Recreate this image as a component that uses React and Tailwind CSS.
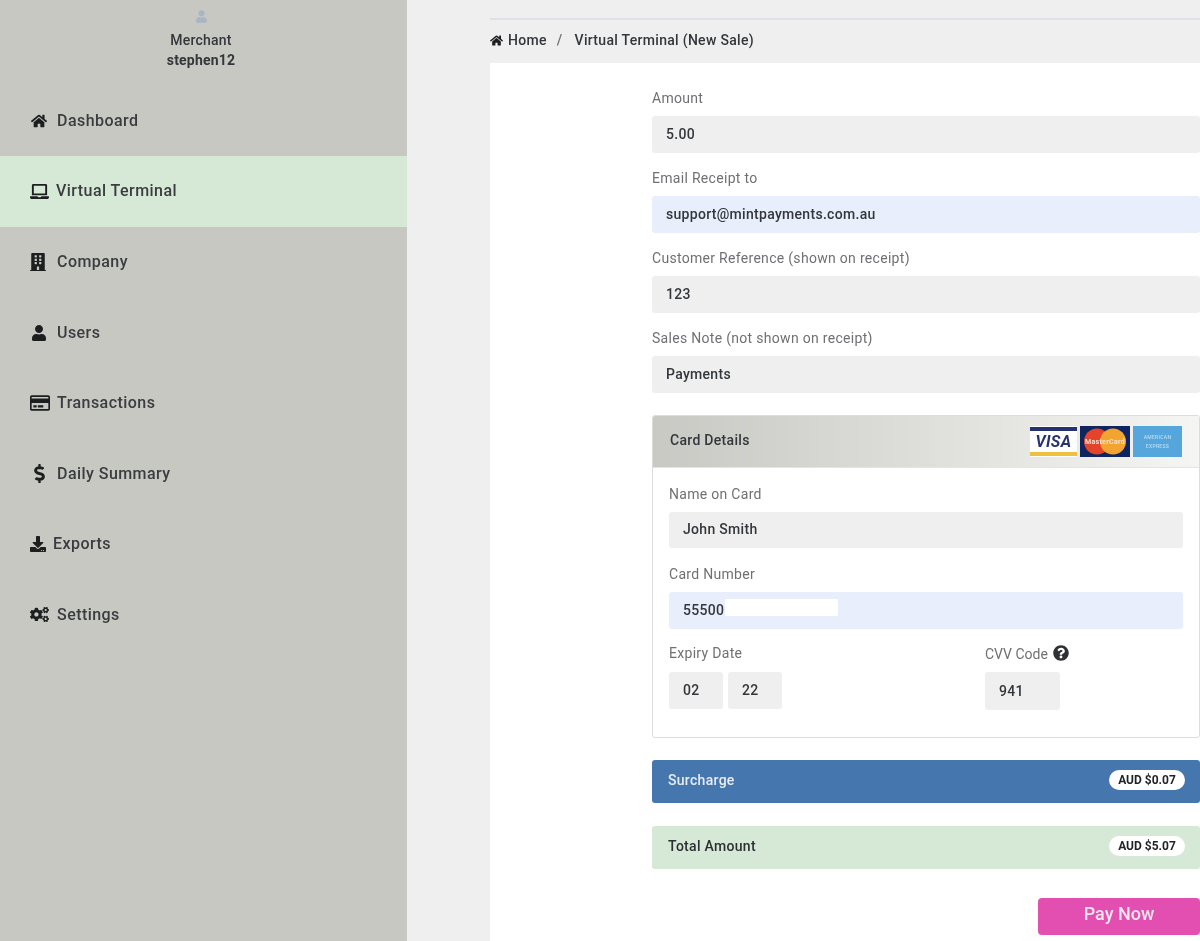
import React from "react";
import { FaHome, FaLaptop, FaBuilding, FaUser, FaRegCreditCard, FaDollarSign, FaDownload, FaCogs, FaQuestionCircle } from "react-icons/fa";

const nav = [
  { label: "Dashboard", Icon: FaHome, icon: "w-[16px] h-[16px]", box: "w-[27px] pl-[1px]" },
  { label: "Virtual Terminal", Icon: FaLaptop, icon: "w-[19px] h-[19px]", box: "w-[26px]", active: true },
  { label: "Company", Icon: FaBuilding, icon: "w-[16px] h-[18px]", box: "w-[27px]" },
  { label: "Users", Icon: FaUser, icon: "w-[16px] h-[16px]", box: "w-[27px] pl-[1px]" },
  { label: "Transactions", Icon: FaRegCreditCard, icon: "w-[20px] h-[20px]", box: "w-[27px]" },
  { label: "Daily Summary", Icon: FaDollarSign, icon: "w-[11px] h-[19px]", box: "w-[27px] pl-[4px]" },
  { label: "Exports", Icon: FaDownload, icon: "w-[16px] h-[16px]", box: "w-[23px]" },
  { label: "Settings", Icon: FaCogs, icon: "w-[19px] h-[17px]", box: "w-[27px]" },
];

function Field({ label, value, blue, className = "" }) {
  return (
    <div className={className}>
      <div className="h-[36px] pt-[10px] text-[14px] leading-[16px] tracking-[0.3px] text-[#6f7073]">{label}</div>
      <div className={`h-[37px] rounded-[3px] pl-[14px] pb-[1px] flex items-center text-[14px] font-medium tracking-[0.3px] text-[#33363a] ${blue ? "bg-[#e8eefb]" : "bg-[#efefef]"}`}>
        {value}
      </div>
    </div>
  );
}

function Bar({ label, amount, className }) {
  return (
    <div className={`h-[43px] rounded-[3px] flex items-center justify-between pb-[3px] pl-[16px] pr-[15px] text-[14px] font-medium tracking-[0.3px] ${className}`}>
      <span>{label}</span>
      <span className="h-[20px] w-[76px] rounded-full bg-white text-[#1f2226] text-[12px] tracking-normal font-bold flex items-center justify-center">{amount}</span>
    </div>
  );
}

function Logos() {
  return (
    <div className="flex gap-[3px]">
      <div className="w-[47px] h-[31px] bg-white flex flex-col justify-between py-[1px]">
        <div className="h-[4px] bg-[#26316f]" />
        <div className="text-center text-[16px] leading-[15px] font-bold italic text-[#27346f]">VISA</div>
        <div className="h-[4px] bg-[#eec040]" />
      </div>
      <svg width="50" height="31" viewBox="0 0 50 31">
        <rect width="50" height="31" fill="#0e2560" />
        <circle cx="17" cy="15.5" r="13" fill="#e2442c" />
        <circle cx="33" cy="15.5" r="13" fill="#f3a32f" />
        <text x="25" y="18" textAnchor="middle" fontSize="7" fontWeight="700" fill="#f6e3cf" fontFamily="Roboto, sans-serif">MasterCard</text>
      </svg>
      <svg width="49" height="31" viewBox="0 0 49 31">
        <rect width="49" height="31" fill="#54a6dd" />
        <text x="24.5" y="13" textAnchor="middle" fontSize="5" fill="#bcdcf2" fontFamily="Roboto, sans-serif">AMERICAN</text>
        <text x="24.5" y="22" textAnchor="middle" fontSize="5" fill="#bcdcf2" fontFamily="Roboto, sans-serif">EXPRESS</text>
      </svg>
    </div>
  );
}

export default function App() {
  return (
    <div className="w-[1200px] h-[941px] overflow-hidden flex bg-[#efefef] font-['Roboto',sans-serif] blur-[0.4px]">
      <aside className="w-[407px] shrink-0 bg-[#c7c8c2] text-[#3a3c40]">
        <div className="h-[85.5px] pt-[10px] pr-[5px] flex flex-col items-center">
          <FaUser className="w-[11px] h-[13px] text-[#a8b5c4] mb-[7px]" />
          <div className="text-[14px] leading-[20px] font-medium tracking-[0.2px] text-[#33363a]">Merchant</div>
          <div className="text-[14px] leading-[20px] font-bold tracking-[0.2px] text-[#33363a]">stephen12</div>
        </div>
        <nav>
          {nav.map(({ label, Icon, icon, box, active }) => (
            <div key={label} className={`h-[70.6px] pl-[30px] flex items-center text-[16px] font-medium tracking-[0.45px] ${active ? "bg-[#d6e8d6]" : ""}`}>
              <span className={`${box} shrink-0 flex items-center text-[#1d1e20]`}>
                <Icon className={icon} />
              </span>
              <span>{label}</span>
            </div>
          ))}
        </nav>
      </aside>
      <main className="flex-1 pl-[83px] flex flex-col">
        <div className="h-[20px] shrink-0 border-b-2 border-[#dfe1e8]" />
        <div className="h-[43px] shrink-0 pb-[2px] flex items-center text-[14px] font-medium tracking-[0.3px] text-[#33363a]">
          <FaHome className="w-[13px] h-[13px] text-[#1d1e20] mr-[5px]" />
          <span>Home</span>
          <span className="ml-[10px] mr-[12px] text-[#6f7073]">/</span>
          <span>Virtual Terminal (New Sale)</span>
        </div>
        <div className="flex-1 bg-white pl-[162px] pt-[17px]">
          <Field label="Amount" value="5.00" />
          <div className="mt-[7px]"><Field label="Email Receipt to" value="support@mintpayments.com.au" blue /></div>
          <div className="mt-[7px]"><Field label="Customer Reference (shown on receipt)" value="123" /></div>
          <div className="mt-[7px]"><Field label="Sales Note (not shown on receipt)" value="Payments" /></div>

          <div className="mt-[22px] h-[323px] rounded-[3px] border border-[#dcdcdc] overflow-hidden">
            <div className="h-[52px] pb-[3px] pl-[17px] pr-[17px] flex items-center justify-between bg-gradient-to-r from-[#c8c9c3] to-[#f5f5f3] border-b border-[#e4e4e4] text-[14px] font-medium tracking-[0.3px] text-[#33363a]">
              <span>Card Details</span>
              <div className="pt-[3px]"><Logos /></div>
            </div>
            <div className="px-[16px] pt-[8px]">
              <div className="[&>div>div:last-child]:h-[36px]"><Field label="Name on Card" value="John Smith" /></div>
              <div className="relative mt-[8px]">
                <Field label="Card Number" value="55500" blue />
                <div className="absolute left-[56px] top-[43px] w-[113px] h-[17px] bg-white" />
              </div>
              <div className="mt-[7px] flex">
                <div className="w-[316px]">
                  <div className="h-[36px] pt-[9px] text-[14px] leading-[16px] tracking-[0.3px] text-[#6f7073]">Expiry Date</div>
                  <div className="flex gap-[5px]">
                    <div className="w-[54px] h-[37px] rounded-[3px] bg-[#efefef] pl-[14px] flex items-center text-[14px] font-medium tracking-[0.3px] text-[#33363a]">02</div>
                    <div className="w-[54px] h-[37px] rounded-[3px] bg-[#efefef] pl-[14px] flex items-center text-[14px] font-medium tracking-[0.3px] text-[#33363a]">22</div>
                  </div>
                </div>
                <div>
                  <div className="h-[36px] pt-[8px] flex items-start gap-[5px] text-[14px] leading-[20px] text-[#6f7073]">
                    <span>CVV Code</span>
                    <FaQuestionCircle className="w-[16px] h-[16px] mt-[1px] text-[#2f3134]" />
                  </div>
                  <div className="w-[75px] h-[38px] rounded-[3px] bg-[#efefef] pl-[14px] flex items-center text-[14px] font-medium tracking-[0.3px] text-[#33363a]">941</div>
                </div>
              </div>
            </div>
          </div>

          <Bar label="Surcharge" amount="AUD $0.07" className="mt-[22px] bg-[#4577ae] text-[#e6edf5]" />
          <Bar label="Total Amount" amount="AUD $5.07" className="mt-[23px] bg-[#d6e8d6] text-[#2c2f33]" />
          <div className="mt-[29px] flex justify-end">
            <button className="w-[162px] h-[37px] pb-[6px] rounded-[4px] bg-[#e24fb1] text-[#f3e6ee] text-[18px] font-medium">Pay Now</button>
          </div>
        </div>
      </main>
    </div>
  );
}
